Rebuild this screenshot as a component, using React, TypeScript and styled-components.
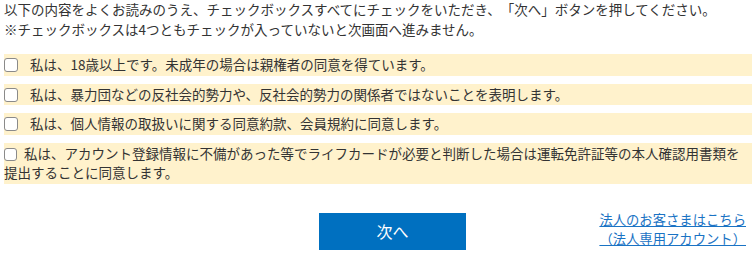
import React, { useState } from 'react';
import styled, { createGlobalStyle } from 'styled-components';

const GlobalStyle = createGlobalStyle`
    body {
        margin: 0;
        background: #fff;
        font-family: "Noto Sans CJK JP", "Noto Sans", sans-serif;
        color: #333;
        text-spacing-trim: space-all;
    }
`;

const Page = styled.div`
    padding: 0 0 0 4px;
    font-size: 13.5px;
`;

const Intro = styled.p`
    margin: 0 0 14.8px;
    line-height: 19.6px;
`;

const AgreeList = styled.div`
    display: flex;
    flex-direction: column;
    gap: 8px;
`;

const Row = styled.label`
    display: block;
    background-color: #fff2cc;
    padding: 1px 10px 1px 0;
    line-height: 19.6px;
    cursor: pointer;
`;

const Check = styled.input<{ $size: number; $gap: number }>`
    appearance: none;
    -webkit-appearance: none;
    width: ${({ $size }) => $size}px;
    height: ${({ $size }) => $size}px;
    margin: 0 ${({ $gap }) => $gap}px 0 0;
    border: 1px solid #8a8a8a;
    border-radius: 3px;
    background: #fff;
    vertical-align: -2px;
    box-sizing: border-box;
    cursor: pointer;

    &:checked {
        background: #0070c0;
        border-color: #0070c0;
    }
`;

const Footer = styled.div`
    display: flex;
    align-items: flex-start;
    margin-top: 28px;
    padding: 0 6px 0 315px;
`;

const NextButton = styled.button`
    width: 147px;
    height: 37px;
    margin-top: 1px;
    border: none;
    background-color: #0070c0;
    color: #fff;
    font-family: inherit;
    font-size: 16px;
    cursor: pointer;
`;

const CorpLink = styled.a`
    margin-left: auto;
    margin-top: -2px;
    text-align: center;
    font-size: 13.33px;
    line-height: 19.4px;
    color: #1a73c4;
    text-decoration: underline;
`;

const items = [
    '私は、18歳以上です。未成年の場合は親権者の同意を得ています。',
    '私は、暴力団などの反社会的勢力や、反社会的勢力の関係者ではないことを表明します。',
    '私は、個人情報の取扱いに関する同意約款、会員規約に同意します。',
    '私は、アカウント登録情報に不備があった等でライフカードが必要と判断した場合は運転免許証等の本人確認用書類を提出することに同意します。',
];

export default function App() {
    const [checked, setChecked] = useState<boolean[]>([false, false, false, false]);

    const toggle = (i: number) => {
        setChecked((prev) => prev.map((v, j) => (j === i ? !v : v)));
    };

    return (
        <>
            <GlobalStyle />
            <Page>
                <Intro>
                    以下の内容をよくお読みのうえ、チェックボックスすべてにチェックをいただき、「次へ」ボタンを押してください。
                    <br />
                    ※チェックボックスは4つともチェックが入っていないと次画面へ進みません。
                </Intro>

                <AgreeList>
                    {items.map((text, i) => {
                        const last = i === items.length - 1;
                        return (
                            <Row key={i}>
                                <Check
                                    type='checkbox'
                                    $size={last ? 13 : 14}
                                    $gap={last ? 7 : 12}
                                    checked={checked[i]}
                                    onChange={() => toggle(i)}
                                />
                                {text}
                            </Row>
                        );
                    })}
                </AgreeList>

                <Footer>
                    <NextButton disabled={!checked.every(Boolean)}>次へ</NextButton>
                    <CorpLink href='#'>
                        法人のお客さまはこちら
                        <br />
                        （法人専用アカウント）
                    </CorpLink>
                </Footer>
            </Page>
        </>
    );
}
